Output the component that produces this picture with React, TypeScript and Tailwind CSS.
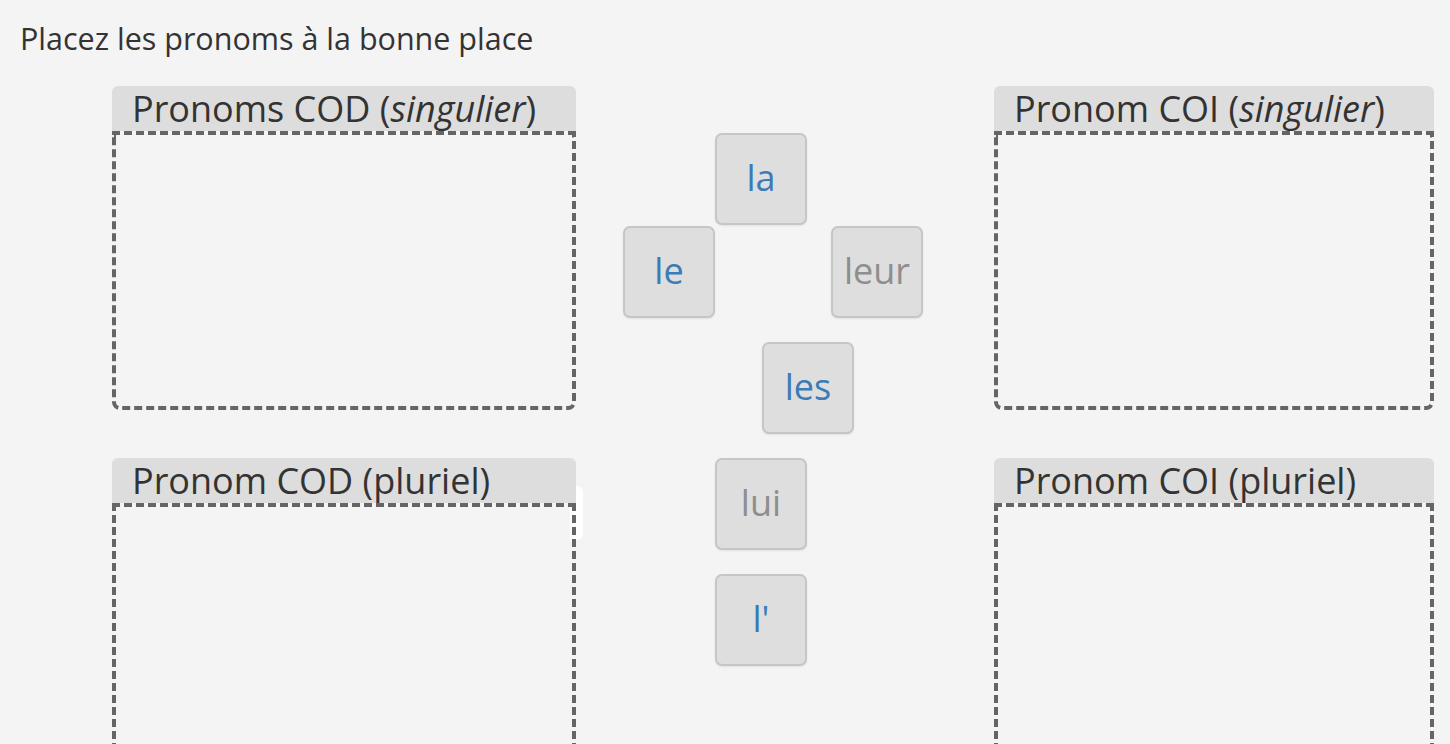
const tiles = [
  { label: "la", left: 92, top: 0, active: true },
  { label: "le", left: 0, top: 93, active: true },
  { label: "leur", left: 208, top: 93, active: false },
  { label: "les", left: 139, top: 209, active: true },
  { label: "lui", left: 92, top: 325, active: false },
  { label: "l'", left: 92, top: 441, active: true },
];

const DropZone = ({
  title,
  boxHeight,
  open,
}: {
  title: React.ReactNode;
  boxHeight: string;
  open?: boolean;
}) => (
  <div className="relative z-10 flex flex-col">
    <div className="h-[45px] rounded-t-[6px] bg-[#dddddd] pl-[20px] text-[36px] leading-[45px] text-[#333333]">
      {title}
    </div>
    <div
      className={`${boxHeight} border-[4px] border-dashed border-[#656565] ${
        open ? "border-b-0" : "rounded-b-[8px]"
      }`}
    />
  </div>
);

export default function App() {
  return (
    <div
      className="h-[744px] overflow-hidden bg-[#f4f4f4]"
      style={{ fontFamily: '"Open Sans", "Noto Sans", sans-serif' }}
    >
      <h1 className="pl-[20px] pt-[18px] text-[30.5px] font-normal leading-[40px] text-[#333333]">
        Placez les pronoms à la bonne place
      </h1>

      <div className="mt-[28px] flex">
        {/* left column */}
        <div className="ml-[112px] flex w-[464px] flex-col gap-[48px]">
          <DropZone
            boxHeight="h-[279px]"
            title={
              <>
                Pronoms COD (<i>singulier</i>)
              </>
            }
          />
          <div className="relative">
            <DropZone boxHeight="h-[260px]" title="Pronom COD (pluriel)" open />
            <div className="absolute left-[458px] top-[28px] z-0 h-[54px] w-[13px] rounded-r-[6px] bg-white" />
          </div>
        </div>

        {/* word bank */}
        <div className="relative flex-1">
          <div className="absolute left-[47px] top-[47px] h-[560px] w-[310px]">
            {tiles.map((t) => (
              <div
                key={t.label}
                className={`absolute flex h-[92px] w-[92px] items-center justify-center rounded-[7px] border-2 border-[#c6c6c6] bg-[#dedede] pb-[2px] text-[36px] shadow-[0_1px_2px_rgba(0,0,0,0.08)] ${
                  t.active ? "text-[#3b7bb8]" : "text-[#8e8e8e]"
                }`}
                style={{ left: t.left, top: t.top }}
              >
                {t.label}
              </div>
            ))}
          </div>
        </div>

        {/* right column */}
        <div className="mr-[16px] flex w-[440px] flex-col gap-[48px]">
          <DropZone
            boxHeight="h-[279px]"
            title={
              <>
                Pronom COI (<i>singulier</i>)
              </>
            }
          />
          <DropZone boxHeight="h-[260px]" title="Pronom COI (pluriel)" open />
        </div>
      </div>
    </div>
  );
}
